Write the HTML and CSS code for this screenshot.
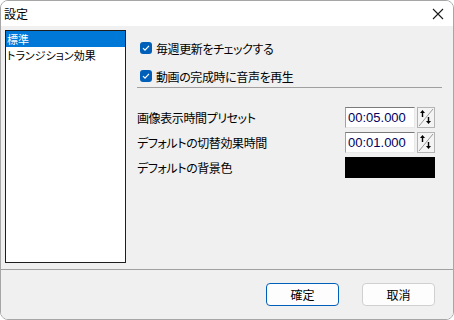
FILE: index.html
```html
<!DOCTYPE html>
<html lang="ja">
<head>
<meta charset="utf-8">
<link rel="stylesheet" href="styles.css">
</head>
<body>
<div class="window">
  <div class="titlebar">
    <span class="title">設定</span>
    <svg class="close" width="12" height="12" viewBox="0 0 12 12"><path d="M1 1 L11 11 M11 1 L1 11" stroke="#1a1a1a" stroke-width="1.1" fill="none"/></svg>
  </div>
  <div class="body">
    <div class="main">
      <div class="list">
        <div class="item selected">標準</div>
        <div class="item">トランジション効果</div>
      </div>
      <div class="panel">
        <div class="check">
          <span class="box"><svg width="12" height="12" viewBox="0 0 12 12"><path d="M3 6.2 L5 8.2 L9 3.8" stroke="#fff" stroke-width="1.2" fill="none"/></svg></span>
          <span>毎週更新をチェックする</span>
        </div>
        <div class="check second">
          <span class="box"><svg width="12" height="12" viewBox="0 0 12 12"><path d="M3 6.2 L5 8.2 L9 3.8" stroke="#fff" stroke-width="1.2" fill="none"/></svg></span>
          <span>動画の完成時に音声を再生</span>
        </div>
        <div class="sep"></div>
        <div class="settings">
          <div class="setting">
            <span class="label">画像表示時間プリセット</span>
            <div class="control">
              <div class="time">00:05.000</div>
              <svg class="spin" width="18" height="21" viewBox="0 0 18 21">
                <rect x="0.5" y="0.5" width="17" height="20" fill="#f4f4f4" stroke="#b4b4b4"/>
                <path d="M2 19 L16 2" stroke="#9a9a9a" stroke-width="1"/>
                <path d="M5.5 5 V10" stroke="#000" stroke-width="1.4"/>
                <path d="M3 6 L5.5 3 L8 6 Z" fill="#000"/>
                <path d="M11.5 10 V15" stroke="#000" stroke-width="1.4"/>
                <path d="M9 14 L11.5 17 L14 14 Z" fill="#000"/>
              </svg>
            </div>
          </div>
          <div class="setting">
            <span class="label">デフォルトの切替効果時間</span>
            <div class="control">
              <div class="time">00:01.000</div>
              <svg class="spin" width="18" height="21" viewBox="0 0 18 21">
                <rect x="0.5" y="0.5" width="17" height="20" fill="#f4f4f4" stroke="#b4b4b4"/>
                <path d="M2 19 L16 2" stroke="#9a9a9a" stroke-width="1"/>
                <path d="M5.5 5 V10" stroke="#000" stroke-width="1.4"/>
                <path d="M3 6 L5.5 3 L8 6 Z" fill="#000"/>
                <path d="M11.5 10 V15" stroke="#000" stroke-width="1.4"/>
                <path d="M9 14 L11.5 17 L14 14 Z" fill="#000"/>
              </svg>
            </div>
          </div>
          <div class="setting">
            <span class="label">デフォルトの背景色</span>
            <div class="control">
              <div class="color"></div>
            </div>
          </div>
        </div>
      </div>
    </div>
    <div class="footer">
      <button class="btn default">確定</button>
      <button class="btn">取消</button>
    </div>
  </div>
</div>
</body>
</html>
```
FILE: styles.css
```css
html, body {
  margin: 0;
  padding: 0;
  background: #ffffff;
}
.window {
  width: 454px;
  height: 320px;
  box-sizing: border-box;
  border: 1px solid #a6a6a6;
  border-radius: 8px;
  overflow: hidden;
  display: flex;
  flex-direction: column;
  font-family: "Noto Sans CJK JP", "Noto Sans", sans-serif;
  font-size: 12px;
  font-feature-settings: "palt";
  color: #000;
}
.titlebar {
  height: 25px;
  flex: none;
  background: #ffffff;
  display: flex;
  align-items: center;
  justify-content: space-between;
  padding: 0 9px 0 3px;
}
.title {
  font-size: 12px;
  line-height: 14px;
}
.close {
  display: block;
  margin-top: 1px;
}
.body {
  flex: 1;
  background: #f0f0f0;
  display: flex;
  flex-direction: column;
}
.main {
  height: 243px;
  flex: none;
  display: flex;
  padding: 4px 0 0 4px;
  box-sizing: border-box;
}
.list {
  width: 121px;
  height: 233px;
  box-sizing: border-box;
  border: 1px solid #1e1e1e;
  background: #ffffff;
}
.item {
  height: 16px;
  line-height: 16px;
  font-size: 11px;
  padding-left: 1px;
  white-space: nowrap;
}
.item.selected {
  background: #0078d7;
  color: #ffffff;
}
.panel {
  width: 305px;
  margin-left: 11px;
  padding-top: 8px;
  display: flex;
  flex-direction: column;
}
.check {
  height: 20px;
  display: flex;
  align-items: center;
  gap: 4px;
  padding-left: 3px;
  letter-spacing: -0.4px;
}
.check.second {
  margin-top: 8px;
}
.box {
  width: 12px;
  height: 12px;
  border-radius: 3px;
  background: #005fb8;
  display: flex;
}
.box svg {
  display: block;
}
.sep {
  height: 1px;
  background: #a0a0a0;
  margin-top: 1px;
}
.settings {
  margin-top: 19px;
  display: flex;
  flex-direction: column;
  gap: 4px;
}
.setting {
  height: 21px;
  display: flex;
  align-items: center;
}
.label {
  flex: 1;
  white-space: nowrap;
  letter-spacing: -0.4px;
}
.control {
  width: 90px;
  margin-right: 7px;
  display: flex;
  align-items: center;
  gap: 2px;
}
.time {
  width: 70px;
  height: 21px;
  box-sizing: border-box;
  background: #ffffff;
  border-top: 1px solid #7a7a7a;
  border-left: 1px solid #a0a0a0;
  border-right: 1px solid #e8e8e8;
  border-bottom: 1px solid #e8e8e8;
  font-family: "Liberation Sans", Arial, sans-serif;
  font-size: 13px;
  line-height: 19px;
  padding-left: 2px;
  color: #000060;
}
.spin {
  display: block;
}
.color {
  width: 90px;
  height: 21px;
  background: #000000;
}
.footer {
  flex: 1;
  border-top: 1px solid #a0a0a0;
  display: flex;
  justify-content: flex-end;
  align-items: flex-start;
  gap: 23px;
  padding: 13px 18px 0 0;
}
.btn {
  width: 73px;
  height: 23px;
  box-sizing: border-box;
  background: #fdfdfd;
  border: 1px solid #d0d0d0;
  border-radius: 4px;
  font-family: "Noto Sans CJK JP", "Noto Sans", sans-serif;
  font-size: 12px;
  color: #000;
  padding: 0;
  line-height: 20px;
}
.btn.default {
  border-color: #005fb8;
}
```
